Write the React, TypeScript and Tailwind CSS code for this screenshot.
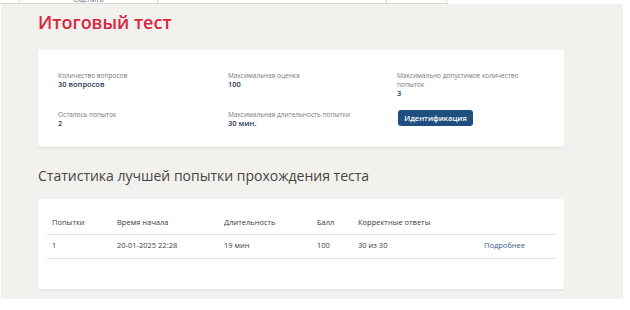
export default function App() {
  return (
    <div className="w-[630px] h-[310px] bg-white font-['Open_Sans',sans-serif] overflow-hidden">
      {/* clipped table strip at top */}
      <div className="h-[4px] overflow-hidden flex w-[448px] border-b border-[#d9d9d6]">
        <div className="w-[19px]" />
        <div className="w-[138px] border-l border-[#d9d9d6] flex justify-center">
          <span className="text-[7px] leading-[9px] -mt-[5px] text-[#5a6a80]">Оценить</span>
        </div>
        <div className="w-[229px] border-l border-[#d9d9d6]" />
        <div className="w-[61px] border-l border-r border-[#d9d9d6]" />
      </div>

      <div className="ml-[1px] w-[622px] h-[295px] bg-[#f2f1ee] pl-[37px] pt-[6px]">
        <h1 className="text-[18px] leading-[24px] font-semibold text-[#d7263f]">Итоговый тест</h1>

        <div className="mt-[16px] w-[526px] h-[97px] bg-white rounded-[2px] shadow-[0_1px_2px_rgba(0,0,0,0.08)] pl-[20px] pt-[21px]">
          <div className="grid grid-cols-[170px_169px_1fr] gap-y-[12px] text-[6.5px] leading-[9px]">
            <div>
              <div className="text-[#777]">Количество вопросов</div>
              <div className="text-[7.5px] font-semibold text-[#2a3b57]">30 вопросов</div>
            </div>
            <div>
              <div className="text-[#777]">Максимальная оценка</div>
              <div className="text-[7.5px] font-semibold text-[#2a3b57]">100</div>
            </div>
            <div className="w-[128px]">
              <div className="text-[#777]">Максимально допустимое количество попыток</div>
              <div className="text-[7.5px] font-semibold text-[#2a3b57]">3</div>
            </div>
            <div>
              <div className="text-[#777]">Осталось попыток</div>
              <div className="text-[7.5px] font-semibold text-[#2a3b57]">2</div>
            </div>
            <div>
              <div className="text-[#777]">Максимальная длительность попытки</div>
              <div className="text-[7.5px] font-semibold text-[#2a3b57]">30 мин.</div>
            </div>
            <div>
              <button className="ml-[1px] w-[75px] h-[16px] rounded-[3px] bg-[#1e4f80] text-white text-[7.5px] font-semibold">
                Идентификация
              </button>
            </div>
          </div>
        </div>

        <h2 className="mt-[19px] text-[14px] leading-[20px] text-[#454545]">Статистика лучшей попытки прохождения теста</h2>

        <div className="mt-[13px] w-[526px] h-[90px] bg-white rounded-[2px] shadow-[0_1px_2px_rgba(0,0,0,0.08)] pl-[8px] pt-[13px]">
          <table className="w-[509px] table-fixed border-collapse text-[7.5px] text-[#3a3a3a]">
            <colgroup>
              <col className="w-[65px]" />
              <col className="w-[107px]" />
              <col className="w-[93px]" />
              <col className="w-[41px]" />
              <col className="w-[126px]" />
              <col className="w-[77px]" />
            </colgroup>
            <thead>
              <tr className="h-[22px] border-b border-[#e3e3e3] text-left">
                <th className="pl-[6px] font-normal">Попытки</th>
                <th className="pl-[6px] font-normal">Время начала</th>
                <th className="pl-[6px] font-normal">Длительность</th>
                <th className="pl-[6px] font-normal">Балл</th>
                <th className="pl-[6px] font-normal">Корректные ответы</th>
                <th className="pl-[6px] font-normal"></th>
              </tr>
            </thead>
            <tbody>
              <tr className="h-[24px] border-b border-[#e3e3e3]">
                <td className="pl-[6px]">1</td>
                <td className="pl-[6px]">20-01-2025 22:28</td>
                <td className="pl-[6px]">19 мин</td>
                <td className="pl-[6px]">100</td>
                <td className="pl-[6px]">30 из 30</td>
                <td className="pl-[6px] text-[#3b5b86]">Подробнее</td>
              </tr>
            </tbody>
          </table>
        </div>
      </div>
    </div>
  )
}
